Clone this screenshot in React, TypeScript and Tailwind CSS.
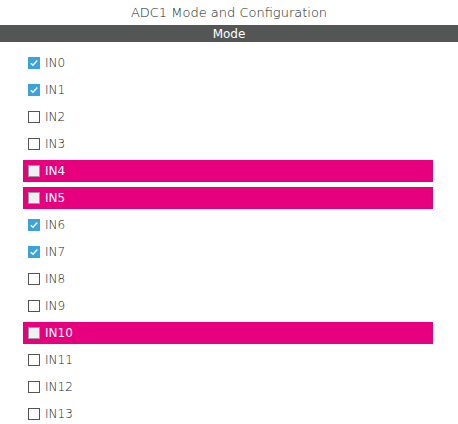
const channels = [
  { name: "IN0", checked: true },
  { name: "IN1", checked: true },
  { name: "IN2", checked: false },
  { name: "IN3", checked: false },
  { name: "IN4", checked: false, conflict: true },
  { name: "IN5", checked: false, conflict: true },
  { name: "IN6", checked: true },
  { name: "IN7", checked: true },
  { name: "IN8", checked: false },
  { name: "IN9", checked: false },
  { name: "IN10", checked: false, conflict: true },
  { name: "IN11", checked: false },
  { name: "IN12", checked: false },
  { name: "IN13", checked: false },
];

function Box({ checked, conflict }: { checked: boolean; conflict?: boolean }) {
  if (checked) {
    return (
      <span className="w-3 h-3 bg-[#3ba3db] flex items-center justify-center shrink-0">
        <svg width="10" height="10" viewBox="0 0 10 10" fill="none">
          <path d="M1.8 5.2 L4 7.3 L8.3 2.6" stroke="white" strokeWidth="1.5" />
        </svg>
      </span>
    );
  }
  if (conflict) {
    return <span className="w-3 h-3 bg-[#eef0f2] border border-[#9a9a9a] shrink-0" />;
  }
  return <span className="w-3 h-3 bg-white border border-[#555] shrink-0" />;
}

export default function App() {
  return (
    <div className="w-[458px] h-[424px] bg-white overflow-hidden font-['DejaVu_Sans',sans-serif] font-extralight">
      <div className="h-[25px] flex items-center justify-center text-[13px] text-[#222]">
        ADC1 Mode and Configuration
      </div>
      <div className="h-[17px] bg-[#545555] flex items-center justify-center text-[12px] text-white font-normal">
        Mode
      </div>
      <div className="pl-[23px] pr-[25px] pt-[10px] flex flex-col gap-[5px]">
        {channels.map((c) => (
          <div
            key={c.name}
            className={
              "h-[22px] flex items-center gap-[5px] pl-[5px] text-[12px] " +
              (c.conflict ? "bg-[#e6007e] text-white font-normal" : "text-[#222]")
            }
          >
            <Box checked={c.checked} conflict={c.conflict} />
            <span>{c.name}</span>
          </div>
        ))}
      </div>
    </div>
  );
}
